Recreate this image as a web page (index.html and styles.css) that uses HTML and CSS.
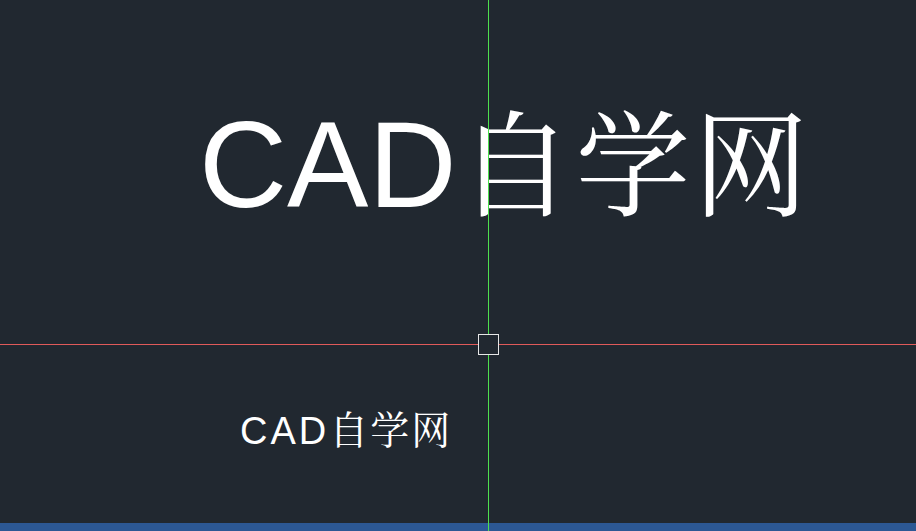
FILE: index.html
```html
<!DOCTYPE html>
<html lang="zh-CN">
<head>
<meta charset="utf-8">
<title>CAD自学网</title>
<link rel="stylesheet" href="styles.css">
</head>
<body>
<div class="app">
  <div class="canvas">
    <div class="text text-big"><span class="latin">CAD</span><span class="cjk">自学网</span></div>
    <div class="text text-small"><span class="latin">CAD</span><span class="cjk">自学网</span></div>
    <div class="cross-h"></div>
    <div class="cross-v"></div>
    <div class="pickbox"></div>
  </div>
  <div class="statusbar"></div>
</div>
</body>
</html>
```
FILE: styles.css
```css
html, body {
  margin: 0;
  padding: 0;
  width: 916px;
  height: 531px;
  overflow: hidden;
  background: #212830;
}

.app {
  position: relative;
  display: flex;
  flex-direction: column;
  width: 916px;
  height: 531px;
}

.canvas {
  position: relative;
  flex: 1;
  background: #212830;
}

.statusbar {
  height: 8px;
  background: #2c5894;
}

.text {
  position: absolute;
  color: #ffffff;
  white-space: nowrap;
  line-height: 1;
  display: flex;
  align-items: baseline;
}

.latin {
  font-family: "Liberation Sans", Arial, sans-serif;
}

.cjk {
  font-family: "Noto Serif CJK SC", "Noto Sans CJK SC", serif;
}

.text-big {
  left: 199px;
  top: 100px;
}

.text-big .latin {
  font-size: 122px;
}

.text-big .cjk {
  font-size: 115px;
  margin-left: 1px;
  letter-spacing: 3px;
}

.text-small {
  left: 240px;
  top: 408px;
}

.text-small .latin {
  font-size: 38px;
  letter-spacing: 3px;
}

.text-small .cjk {
  font-size: 39px;
  letter-spacing: 2px;
}

.cross-h {
  position: absolute;
  left: 0;
  right: 0;
  top: 344px;
  height: 1px;
  background: #e05a5a;
}

.cross-v {
  position: absolute;
  left: 488px;
  top: 0;
  width: 1px;
  height: 531px;
  background: #4ee04e;
  z-index: 2;
}

.pickbox {
  position: absolute;
  left: 478px;
  top: 334px;
  width: 19px;
  height: 19px;
  border: 1px solid #e6e6e6;
  background: #212830;
  z-index: 3;
}
```
